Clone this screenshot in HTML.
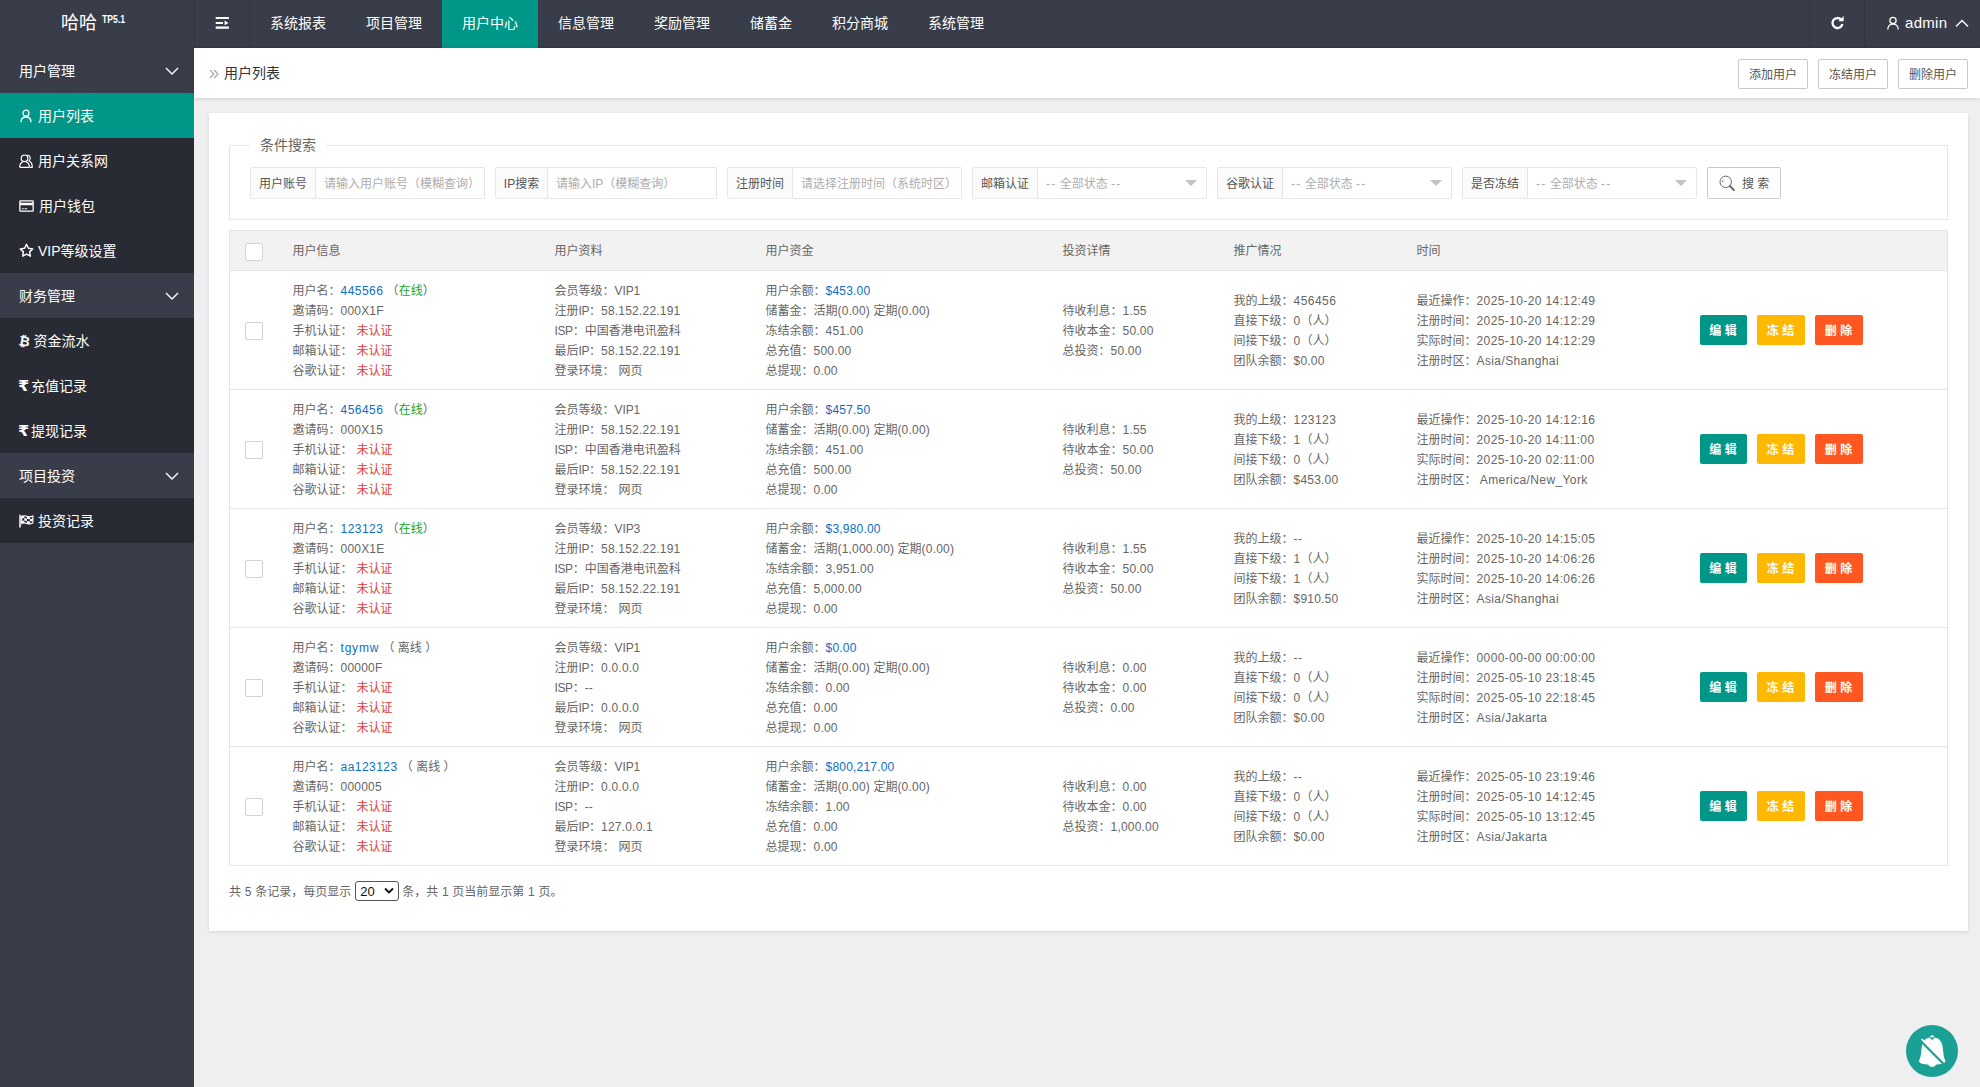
<!DOCTYPE html>
<html lang="zh-CN">
<head>
<meta charset="utf-8">
<title>用户列表</title>
<style>
*{box-sizing:border-box;margin:0;padding:0}
html,body{width:1980px;height:1087px;overflow:hidden}
body{font-family:"Liberation Sans","Noto Sans CJK SC",sans-serif;font-size:12px;color:#666;background:#efefef;position:relative}
a{text-decoration:none;color:#0b6fc4}
i{font-style:normal}
/* header */
#hd{position:absolute;left:0;top:0;width:1980px;height:48px;background:#393d49;border-bottom:1px solid #343843}
#logo{position:absolute;left:0;top:0;width:194px;height:47px;color:#fff;font-size:18px;line-height:46px;padding-left:61px;white-space:nowrap}
#logo sup{font-size:10px;font-weight:bold;position:relative;top:-6.500px;left:5px;vertical-align:baseline;display:inline-block;transform:scaleX(.87);transform-origin:0 50%;line-height:10px}
#burger{position:absolute;left:194px;top:0;width:56px;height:47px;border-left:1px solid #333743;border-right:1px solid #333743}
#nav{position:absolute;left:250px;top:0;height:47px;display:flex}
#nav span{display:block;height:48px;line-height:47px;padding:0 20px;color:#fff;font-size:14px}
#nav span.act{background:#009688}
#refresh{position:absolute;left:1809px;top:0;width:56px;height:47px;border-left:1px solid #333743;border-right:1px solid #333743}
#admin{position:absolute;left:1865px;top:0;width:115px;height:47px;color:#fff;font-size:15px;line-height:45px;letter-spacing:.3px}
/* side */
#side{position:absolute;left:0;top:48px;width:194px;height:1039px;background:#393d49}
#side .g{height:45px;line-height:47px;color:#fff;font-size:14px;padding-left:19px;position:relative;background:#393d49}
#side .s{height:45px;line-height:45px;color:#fff;font-size:14px;padding-left:19px;position:relative;background:#282b33;display:flex;align-items:center;padding-top:2px}
#side .s.act{background:#009688}
#side .g svg{position:absolute;left:165px;top:19px}
.ru{font-family:"DejaVu Sans",sans-serif;font-size:15px;margin-left:-1px;margin-right:2.500px;position:relative;top:0;display:inline-block;transform:scaleX(1.08);transform-origin:0 50%}
.bt2{font-family:"DejaVu Sans",sans-serif;font-size:13.500px;margin-right:3.500px;position:relative;top:-.500px;display:inline-block;transform:rotate(9deg)}
#side .s svg{margin-right:5px;flex:none;position:relative;top:-1px}
/* breadcrumb */
#bc{position:absolute;left:194px;top:48px;width:1786px;height:50px;background:#fff;box-shadow:0 1px 4px rgba(0,0,0,.12)}
#bc .t{position:absolute;left:30px;top:0;line-height:50px;font-size:14px;color:#333}
#bc .ar{position:absolute;left:15px;top:21px}
#bc .bt{position:absolute;top:11px;height:30px;width:70px;border:1px solid #c9c9c9;border-radius:2px;background:#fff;color:#555;font-size:12px;line-height:31px;text-align:center}
/* card */
#card{position:absolute;left:209px;top:113px;width:1759px;height:818px;background:#fff;box-shadow:0 1px 3px rgba(0,0,0,.12)}
#fs{position:absolute;left:20px;top:32px;width:1719px;height:75px;border:1px solid #e6e6e6}
#fs .lg{position:absolute;left:20px;top:-12px;background:#fff;padding:0 10px;font-size:14px;line-height:22px;color:#666}
.grp{position:absolute;top:21px;height:32px;border:1px solid #e6e6e6;border-radius:2px;background:#fff;display:flex}
.grp .l{height:30px;line-height:32px;background:#fbfbfb;border-right:1px solid #e6e6e6;color:#555;text-align:center;flex:none;width:65px}
.grp .p{height:30px;line-height:32px;color:#adadad;padding-left:8px;flex:1;position:relative;white-space:nowrap}
.ds{letter-spacing:1.2px}
.grp .p svg{position:absolute;right:9px;top:12px}
#sbtn{position:absolute;left:1477px;top:21px;width:74px;height:32px;border:1px solid #c9c9c9;border-radius:2px;color:#555;line-height:32px;padding-left:34px}
#sbtn svg{position:absolute;left:10px;top:6px}
/* table */
#tb{position:absolute;left:20px;top:117px;width:1719px;border-collapse:collapse;table-layout:fixed;border:1px solid #e6e6e6}
#tb th{height:40px;background:#f2f2f2;text-align:left;font-weight:normal;color:#666;font-size:12px;border-bottom:1px solid #e6e6e6;padding-bottom:2px}
#tb th .cb{top:2px}
#tb td{height:119px;border-bottom:1px solid #e6e6e6;vertical-align:middle;color:#666;line-height:20px;white-space:nowrap}
#tb td div{height:20px;position:relative;top:1px}
.n{letter-spacing:.2px}.nw{letter-spacing:.45px}.nt{letter-spacing:.39px}.nv{letter-spacing:-.1px}.ni{letter-spacing:-.4px}.nx{letter-spacing:.8px}
.c0{width:63px;padding-left:15px}
.cb{display:block;width:18px;height:18px;border:1px solid #d2d2d2;border-radius:2px;background:#fff;position:relative;top:1px}
.c1{width:262px}.c2{width:211px}.c3{width:297px}.c4{width:171px}.c5{width:183px}.c6{width:283px}
.no{color:#e23b3b;font-weight:normal;margin-left:4px}
.on{color:#1aa51a}
.env{margin-left:4px}
.btn{display:inline-block;width:47px;height:30px;line-height:32.500px;border-radius:2px;color:#fff;font-size:12px;text-align:center;margin-right:10px;font-weight:bold}
.b1{background:#009688}.b2{background:#ffb800;width:48px}.b3{background:#ff5722;width:48px}
#ft{position:absolute;left:20px;top:769px;line-height:20px;color:#666;display:flex;align-items:center;word-spacing:.4px}
#ft .sel{display:inline-block;width:44px;height:20px;border:1px solid #555;border-radius:3px;margin:0 3px 0 4px;color:#111;top:-1px;font-size:13px;line-height:20px;padding-left:4px;position:relative;background:#fff}
#ft .sel svg{position:absolute;right:4px;top:5px}
#bell{position:absolute;left:1906px;top:1025px;width:52px;height:52px;border-radius:50%;background:#1aa094}
</style>
</head>
<body>
<div id="hd">
  <div id="logo">哈哈<sup>TP5.1</sup></div>
  <div id="burger"><svg width="56" height="47" viewBox="0 0 56 47" style="margin-left:-1px"><path d="M21.700 16.900h13.200v2.200H21.700zM21.700 21.900h7.300v2.200h-7.300zM21.700 26.400h13.200v2.300H21.700zM30.600 20.500l3.800 2.400-3.800 2.400z" fill="#fff"/></svg></div>
  <div id="nav"><span>系统报表</span><span>项目管理</span><span class="act">用户中心</span><span>信息管理</span><span>奖励管理</span><span style="padding:0 20px 0 20px">储蓄金</span><span>积分商城</span><span>系统管理</span></div>
  <div id="refresh"><svg width="55" height="47" viewBox="0 0 55 47"><path d="M31 19.400a5 5 0 1 0 1.400 4.700" fill="none" stroke="#fff" stroke-width="2.300"/><path d="M28.400 21.200h5.200v-5.200z" fill="#fff"/></svg></div>
  <div id="admin"><svg style="position:absolute;left:21px;top:16px" width="14" height="15" viewBox="0 0 14 15"><g fill="none" stroke="#fff" stroke-width="1.3"><circle cx="7" cy="4.4" r="3.1"/><path d="M1.8 13.6c0-3.4 2.2-5.6 5.2-5.6s5.2 2.2 5.2 5.6"/></g></svg><span style="position:absolute;left:40px">admin</span><svg style="position:absolute;left:89.500px;top:18px" width="14" height="10" viewBox="0 0 14 10"><path d="M1 8.5l6-6 6 6" fill="none" stroke="#fff" stroke-width="1.4"/></svg></div>
</div>

<div id="side">
  <div class="g">用户管理<svg width="14" height="9" viewBox="0 0 14 9"><path d="M1 1l6 6 6-6" fill="none" stroke="#fff" stroke-width="1.4"/></svg></div>
  <div class="s act"><svg width="14" height="14" viewBox="0 0 14 14"><g fill="none" stroke="#fff" stroke-width="1.3"><circle cx="7" cy="4.2" r="3"/><path d="M2 13.2c0-3.2 2.1-5.2 5-5.2s5 2 5 5.2"/></g></svg>用户列表</div>
  <div class="s"><svg width="14" height="14" viewBox="0 0 14 14"><g fill="none" stroke="#fff" stroke-width="1.200" stroke-linejoin="round"><circle cx="5.500" cy="4.300" r="3.300"/><path d="M.700 13.300c0-3 1.100-4.600 3.100-5.300M10.400 13.300c0-3-1.100-4.600-3.100-5.300M.700 13.300h9.700"/><path d="M8.300 1.100c2.900.1 4 3.600 1.700 5.900 2.400.8 3.300 2.600 3.300 6.300h-2.600"/></g></svg>用户关系网</div>
  <div class="s"><svg width="15" height="14" viewBox="0 0 15 14" style="margin-right:5px"><path d="M1.500 1.200h12a1.300 1.300 0 0 1 1.300 1.300v9a1.300 1.300 0 0 1-1.300 1.300h-12a1.300 1.300 0 0 1-1.300-1.300v-9a1.300 1.300 0 0 1 1.300-1.300zM1.500 2.500v1.300h12V2.500zM1.500 6.200v5.300h12V6.200zM2.800 9.200h1.900v1.100H2.800zM5.500 9.200h2.600v1.100H5.500z" fill="#fff" fill-rule="evenodd"/></svg>用户钱包</div>
  <div class="s"><svg width="15" height="15" viewBox="0 0 14 14" style="margin-left:-.500px;margin-right:4.500px;top:-1.500px"><path d="M7 1.2l1.8 3.7 4 .6-2.9 2.8.7 4L7 10.4l-3.6 1.9.7-4L1.2 5.5l4-.6z" fill="none" stroke="#fff" stroke-width="1.350" stroke-linejoin="round"/></svg>VIP等级设置</div>
  <div class="g">财务管理<svg width="14" height="9" viewBox="0 0 14 9"><path d="M1 1l6 6 6-6" fill="none" stroke="#fff" stroke-width="1.4"/></svg></div>
  <div class="s"><b class="bt2">₿</b>资金流水</div>
  <div class="s"><b class="ru">₹</b>充值记录</div>
  <div class="s"><b class="ru">₹</b>提现记录</div>
  <div class="g">项目投资<svg width="14" height="9" viewBox="0 0 14 9"><path d="M1 1l6 6 6-6" fill="none" stroke="#fff" stroke-width="1.4"/></svg></div>
  <div class="s"><svg width="15" height="14" viewBox="0 0 15 14" style="margin-right:4px"><path d="M1 .800v12.700" stroke="#fff" stroke-width="1.500"/><path d="M2.600 2.200c2-.9 3.500-.6 5.300.1 1.800.7 3.800.7 6-.4v7.200c-2.200 1.100-4.200 1.100-6 .4-1.800-.7-3.300-1-5.300-.1z" fill="none" stroke="#fff" stroke-width="1.100"/><path d="M2.600 2.200c1-.45 1.900-.6 2.700-.55v2.400c-.8-.05-1.700.1-2.700.55zM5.300 4.050c.9.050 1.700.3 2.600.65v2.400c-.9-.35-1.700-.6-2.600-.65zM7.900 2.300c1 .4 2 .55 3 .45v2.400c-1 .1-2-.05-3-.45zM10.900 5.150c1-.1 2-.4 3-.95v2.400c-1 .55-2 .85-3 .95zM2.600 7c1-.45 1.900-.6 2.700-.55v2.400c-.8-.05-1.700.1-2.700.55zM7.900 7.100c1 .4 2 .55 3 .45v2.400c-1 .1-2-.05-3-.45z" fill="#fff"/></svg>投资记录</div>
</div>

<div id="bc">
  <svg class="ar" width="10" height="10" viewBox="0 0 10 10"><path d="M1 1l3.800 4-3.800 4M5.200 1l3.800 4-3.800 4" fill="none" stroke="#aaa" stroke-width="1.300"/></svg>
  <span class="t">用户列表</span>
  <span class="bt" style="left:1544px">添加用户</span>
  <span class="bt" style="left:1624px">冻结用户</span>
  <span class="bt" style="left:1704px">删除用户</span>
</div>

<div id="card">
  <div id="fs">
    <span class="lg">条件搜索</span>
    <div class="grp" style="left:20px;width:235px"><span class="l">用户账号</span><span class="p">请输入用户账号（模糊查询）</span></div>
    <div class="grp" style="left:265px;width:222px"><span class="l" style="width:52px">IP搜索</span><span class="p">请输入IP（模糊查询）</span></div>
    <div class="grp" style="left:497px;width:235px"><span class="l">注册时间</span><span class="p">请选择注册时间（系统时区）</span></div>
    <div class="grp" style="left:742px;width:235px"><span class="l">邮箱认证</span><span class="p"><i class="ds">--</i> 全部状态 <i class="ds">--</i><svg width="12" height="6" viewBox="0 0 12 6"><path d="M0 0h12l-6 6z" fill="#c2c2c2"/></svg></span></div>
    <div class="grp" style="left:987px;width:235px"><span class="l">谷歌认证</span><span class="p"><i class="ds">--</i> 全部状态 <i class="ds">--</i><svg width="12" height="6" viewBox="0 0 12 6"><path d="M0 0h12l-6 6z" fill="#c2c2c2"/></svg></span></div>
    <div class="grp" style="left:1232px;width:235px"><span class="l">是否冻结</span><span class="p"><i class="ds">--</i> 全部状态 <i class="ds">--</i><svg width="12" height="6" viewBox="0 0 12 6"><path d="M0 0h12l-6 6z" fill="#c2c2c2"/></svg></span></div>
    <div id="sbtn"><svg width="20" height="20" viewBox="0 0 20 20"><g fill="none" stroke="#666" stroke-width="1"><circle cx="7.700" cy="7.800" r="5.700"/><path d="M11.900 12l4 4" stroke-width="1.900" stroke-linecap="round"/><path d="M4.600 8.400a3.300 3.300 0 0 1 1-2.900" stroke-width=".8"/></g></svg>搜 索</div>
  </div>
  <table id="tb">
    <tr><th class="c0"><i class="cb"></i></th><th class="c1">用户信息</th><th class="c2">用户资料</th><th class="c3">用户资金</th><th class="c4">投资详情</th><th class="c5">推广情况</th><th class="c6">时间</th><th class="c7"></th></tr>
<tr>
<td class="c0"><i class="cb"></i></td>
<td class="c1"><div>用户名：<a><span class="nw">445566</span></a> <span class="par">（</span><span class="on">在线</span><span class="par">）</span></div><div>邀请码：<span class="n">000X1F</span></div><div>手机认证：<b class="no">未认证</b></div><div>邮箱认证：<b class="no">未认证</b></div><div>谷歌认证：<b class="no">未认证</b></div></td>
<td class="c2"><div>会员等级：<span class="nv">VIP1</span></div><div>注册<span class="ni">IP</span>：<span class="n">58.152.22.191</span></div><div><span class="ni">ISP</span>：中国香港电讯盈科</div><div>最后<span class="ni">IP</span>：<span class="n">58.152.22.191</span></div><div>登录环境：<span class="env">网页</span></div></td>
<td class="c3"><div>用户余额：<a><span class="n">$453.00</span></a></div><div>储蓄金：活期<span class="n">(0.00)</span> 定期<span class="n">(0.00)</span></div><div>冻结余额：<span class="n">451.00</span></div><div>总充值：<span class="n">500.00</span></div><div>总提现：<span class="n">0.00</span></div></td>
<td class="c4"><div>待收利息：<span class="n">1.55</span></div><div>待收本金：<span class="n">50.00</span></div><div>总投资：<span class="n">50.00</span></div></td>
<td class="c5"><div>我的上级：<span class="nw">456456</span></div><div>直接下级：<span class="n">0</span>（人）</div><div>间接下级：<span class="n">0</span>（人）</div><div>团队余额：<span class="n">$0.00</span></div></td>
<td class="c6"><div>最近操作：<span class="nt">2025-10-20 14:12:49</span></div><div>注册时间：<span class="nt">2025-10-20 14:12:29</span></div><div>实际时间：<span class="nt">2025-10-20 14:12:29</span></div><div>注册时区：<span class="nt">Asia/Shanghai</span></div></td>
<td class="c7"><span class="btn b1">编 辑</span><span class="btn b2">冻 结</span><span class="btn b3">删 除</span></td>
</tr>
<tr>
<td class="c0"><i class="cb"></i></td>
<td class="c1"><div>用户名：<a><span class="nw">456456</span></a> <span class="par">（</span><span class="on">在线</span><span class="par">）</span></div><div>邀请码：<span class="n">000X15</span></div><div>手机认证：<b class="no">未认证</b></div><div>邮箱认证：<b class="no">未认证</b></div><div>谷歌认证：<b class="no">未认证</b></div></td>
<td class="c2"><div>会员等级：<span class="nv">VIP1</span></div><div>注册<span class="ni">IP</span>：<span class="n">58.152.22.191</span></div><div><span class="ni">ISP</span>：中国香港电讯盈科</div><div>最后<span class="ni">IP</span>：<span class="n">58.152.22.191</span></div><div>登录环境：<span class="env">网页</span></div></td>
<td class="c3"><div>用户余额：<a><span class="n">$457.50</span></a></div><div>储蓄金：活期<span class="n">(0.00)</span> 定期<span class="n">(0.00)</span></div><div>冻结余额：<span class="n">451.00</span></div><div>总充值：<span class="n">500.00</span></div><div>总提现：<span class="n">0.00</span></div></td>
<td class="c4"><div>待收利息：<span class="n">1.55</span></div><div>待收本金：<span class="n">50.00</span></div><div>总投资：<span class="n">50.00</span></div></td>
<td class="c5"><div>我的上级：<span class="nw">123123</span></div><div>直接下级：<span class="n">1</span>（人）</div><div>间接下级：<span class="n">0</span>（人）</div><div>团队余额：<span class="n">$453.00</span></div></td>
<td class="c6"><div>最近操作：<span class="nt">2025-10-20 14:12:16</span></div><div>注册时间：<span class="nt">2025-10-20 14:11:00</span></div><div>实际时间：<span class="nt">2025-10-20 02:11:00</span></div><div>注册时区：&nbsp;<span class="nt">America/New_York</span></div></td>
<td class="c7"><span class="btn b1">编 辑</span><span class="btn b2">冻 结</span><span class="btn b3">删 除</span></td>
</tr>
<tr>
<td class="c0"><i class="cb"></i></td>
<td class="c1"><div>用户名：<a><span class="nw">123123</span></a> <span class="par">（</span><span class="on">在线</span><span class="par">）</span></div><div>邀请码：<span class="n">000X1E</span></div><div>手机认证：<b class="no">未认证</b></div><div>邮箱认证：<b class="no">未认证</b></div><div>谷歌认证：<b class="no">未认证</b></div></td>
<td class="c2"><div>会员等级：<span class="nv">VIP3</span></div><div>注册<span class="ni">IP</span>：<span class="n">58.152.22.191</span></div><div><span class="ni">ISP</span>：中国香港电讯盈科</div><div>最后<span class="ni">IP</span>：<span class="n">58.152.22.191</span></div><div>登录环境：<span class="env">网页</span></div></td>
<td class="c3"><div>用户余额：<a><span class="n">$3,980.00</span></a></div><div>储蓄金：活期<span class="n">(1,000.00)</span> 定期<span class="n">(0.00)</span></div><div>冻结余额：<span class="n">3,951.00</span></div><div>总充值：<span class="n">5,000.00</span></div><div>总提现：<span class="n">0.00</span></div></td>
<td class="c4"><div>待收利息：<span class="n">1.55</span></div><div>待收本金：<span class="n">50.00</span></div><div>总投资：<span class="n">50.00</span></div></td>
<td class="c5"><div>我的上级：<span class="nw">--</span></div><div>直接下级：<span class="n">1</span>（人）</div><div>间接下级：<span class="n">1</span>（人）</div><div>团队余额：<span class="n">$910.50</span></div></td>
<td class="c6"><div>最近操作：<span class="nt">2025-10-20 14:15:05</span></div><div>注册时间：<span class="nt">2025-10-20 14:06:26</span></div><div>实际时间：<span class="nt">2025-10-20 14:06:26</span></div><div>注册时区：<span class="nt">Asia/Shanghai</span></div></td>
<td class="c7"><span class="btn b1">编 辑</span><span class="btn b2">冻 结</span><span class="btn b3">删 除</span></td>
</tr>
<tr>
<td class="c0"><i class="cb"></i></td>
<td class="c1"><div>用户名：<a><span class="nx">tgymw</span></a> <span class="off">（ 离线 ）</span></div><div>邀请码：<span class="n">00000F</span></div><div>手机认证：<b class="no">未认证</b></div><div>邮箱认证：<b class="no">未认证</b></div><div>谷歌认证：<b class="no">未认证</b></div></td>
<td class="c2"><div>会员等级：<span class="nv">VIP1</span></div><div>注册<span class="ni">IP</span>：<span class="n">0.0.0.0</span></div><div><span class="ni">ISP</span>：<span class="n">--</span></div><div>最后<span class="ni">IP</span>：<span class="n">0.0.0.0</span></div><div>登录环境：<span class="env">网页</span></div></td>
<td class="c3"><div>用户余额：<a><span class="n">$0.00</span></a></div><div>储蓄金：活期<span class="n">(0.00)</span> 定期<span class="n">(0.00)</span></div><div>冻结余额：<span class="n">0.00</span></div><div>总充值：<span class="n">0.00</span></div><div>总提现：<span class="n">0.00</span></div></td>
<td class="c4"><div>待收利息：<span class="n">0.00</span></div><div>待收本金：<span class="n">0.00</span></div><div>总投资：<span class="n">0.00</span></div></td>
<td class="c5"><div>我的上级：<span class="nw">--</span></div><div>直接下级：<span class="n">0</span>（人）</div><div>间接下级：<span class="n">0</span>（人）</div><div>团队余额：<span class="n">$0.00</span></div></td>
<td class="c6"><div>最近操作：<span class="nt">0000-00-00 00:00:00</span></div><div>注册时间：<span class="nt">2025-05-10 23:18:45</span></div><div>实际时间：<span class="nt">2025-05-10 22:18:45</span></div><div>注册时区：<span class="nt">Asia/Jakarta</span></div></td>
<td class="c7"><span class="btn b1">编 辑</span><span class="btn b2">冻 结</span><span class="btn b3">删 除</span></td>
</tr>
<tr>
<td class="c0"><i class="cb"></i></td>
<td class="c1"><div>用户名：<a><span class="nw">aa123123</span></a> <span class="off">（ 离线 ）</span></div><div>邀请码：<span class="n">000005</span></div><div>手机认证：<b class="no">未认证</b></div><div>邮箱认证：<b class="no">未认证</b></div><div>谷歌认证：<b class="no">未认证</b></div></td>
<td class="c2"><div>会员等级：<span class="nv">VIP1</span></div><div>注册<span class="ni">IP</span>：<span class="n">0.0.0.0</span></div><div><span class="ni">ISP</span>：<span class="n">--</span></div><div>最后<span class="ni">IP</span>：<span class="n">127.0.0.1</span></div><div>登录环境：<span class="env">网页</span></div></td>
<td class="c3"><div>用户余额：<a><span class="n">$800,217.00</span></a></div><div>储蓄金：活期<span class="n">(0.00)</span> 定期<span class="n">(0.00)</span></div><div>冻结余额：<span class="n">1.00</span></div><div>总充值：<span class="n">0.00</span></div><div>总提现：<span class="n">0.00</span></div></td>
<td class="c4"><div>待收利息：<span class="n">0.00</span></div><div>待收本金：<span class="n">0.00</span></div><div>总投资：<span class="n">1,000.00</span></div></td>
<td class="c5"><div>我的上级：<span class="nw">--</span></div><div>直接下级：<span class="n">0</span>（人）</div><div>间接下级：<span class="n">0</span>（人）</div><div>团队余额：<span class="n">$0.00</span></div></td>
<td class="c6"><div>最近操作：<span class="nt">2025-05-10 23:19:46</span></div><div>注册时间：<span class="nt">2025-05-10 14:12:45</span></div><div>实际时间：<span class="nt">2025-05-10 13:12:45</span></div><div>注册时区：<span class="nt">Asia/Jakarta</span></div></td>
<td class="c7"><span class="btn b1">编 辑</span><span class="btn b2">冻 结</span><span class="btn b3">删 除</span></td>
</tr>
  </table>
  <div id="ft">共 5 条记录，每页显示<span class="sel">20<svg width="10" height="8" viewBox="0 0 10 8"><path d="M1 1.500l4 4 4-4" fill="none" stroke="#111" stroke-width="1.8"/></svg></span>条，共 1 页当前显示第 1 页。</div>
</div>

<div id="bell"><svg width="52" height="52" viewBox="0 0 52 52"><path d="M26.2 10.300a2.200 2.200 0 1 0 .01 0zM26.2 12.2C31 12.2 34.5 14.2 36 19C36.8 22 37.2 27 37.7 30.5C38 32.5 38.6 33.8 39.1 35C39.7 36.6 38.8 37.9 37 38.5C34.5 39.3 31.5 39.4 30.2 39.5C29.5 41 28 41.9 26.2 41.9C24.4 41.9 22.9 41 22.2 39.5C20.9 39.4 17.9 39.3 15.4 38.5C13.6 37.9 12.7 36.6 13.3 35C13.8 33.8 14.4 32.5 14.7 30.5C15.2 27 15.6 22 16.4 19C17.9 14.2 21.4 12.2 26.2 12.2Z" fill="#fff"/><path d="M15.6 14.200l23 23" stroke="#fff" stroke-width="1.800"/><path d="M14.400 15.800l23 23" stroke="#1aa094" stroke-width="2.300"/></svg></div>
</body>
</html>
